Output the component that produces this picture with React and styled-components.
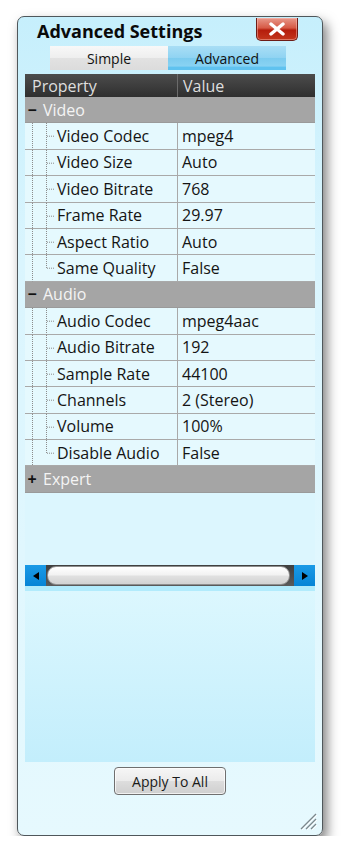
import React from 'react';
import styled, { createGlobalStyle } from 'styled-components';

const GlobalStyle = createGlobalStyle`
  html, body {
    margin: 0;
    padding: 0;
    background: #ffffff;
  }
  body {
    font-family: "Open Sans", "Noto Sans", sans-serif;
    color: #141414;
  }
`;

const groups = [
  {
    name: 'Video',
    open: true,
    rows: [
      ['Video Codec', 'mpeg4'],
      ['Video Size', 'Auto'],
      ['Video Bitrate', '768'],
      ['Frame Rate', '29.97'],
      ['Aspect Ratio', 'Auto'],
      ['Same Quality', 'False'],
    ],
  },
  {
    name: 'Audio',
    open: true,
    rows: [
      ['Audio Codec', 'mpeg4aac'],
      ['Audio Bitrate', '192'],
      ['Sample Rate', '44100'],
      ['Channels', '2 (Stereo)'],
      ['Volume', '100%'],
      ['Disable Audio', 'False'],
    ],
  },
  { name: 'Expert', open: false, rows: [] },
];

const App = () => {
  return (
    <>
      <GlobalStyle />
      <Window>
        <TitleBar>
          <Title>Advanced Settings</Title>
          <CloseButton aria-label="close">
            <svg width="18" height="14" viewBox="0 0 18 14">
              <path
                d="M3 2 L15 12 M15 2 L3 12"
                stroke="#ffffff"
                strokeWidth="3.4"
                strokeLinecap="round"
              />
            </svg>
          </CloseButton>
        </TitleBar>

        <Tabs>
          <Tab>Simple</Tab>
          <Tab active>Advanced</Tab>
        </Tabs>

        <Panel>
          <HeaderRow>
            <HeaderCell>Property</HeaderCell>
            <HeaderCell divider>Value</HeaderCell>
          </HeaderRow>

          {groups.map((g) => (
            <React.Fragment key={g.name}>
              <CategoryRow>
                <Toggle>{g.open ? '−' : '+'}</Toggle>
                <CategoryName>{g.name}</CategoryName>
              </CategoryRow>
              {g.rows.map(([label, value], i) => (
                <PropRow key={label}>
                  <NameCell>
                    <Guides width="32" height="100%">
                      <line x1="7.5" y1="0" x2="7.5" y2="100%" />
                      <line
                        x1="21.5"
                        y1="0"
                        x2="21.5"
                        y2={i === g.rows.length - 1 ? '50%' : '100%'}
                      />
                      <line x1="22" y1="50%" x2="29" y2="50%" />
                    </Guides>
                    {label}
                  </NameCell>
                  <ValueCell>{value}</ValueCell>
                </PropRow>
              ))}
            </React.Fragment>
          ))}

          <EmptyArea />

          <ScrollBar>
            <ScrollArrow>
              <svg width="6" height="8" viewBox="0 0 6 8">
                <path d="M6 0 L0 4 L6 8 Z" fill="#000" />
              </svg>
            </ScrollArrow>
            <Track>
              <Thumb />
            </Track>
            <ScrollArrow>
              <svg width="6" height="8" viewBox="0 0 6 8">
                <path d="M0 0 L6 4 L0 8 Z" fill="#000" />
              </svg>
            </ScrollArrow>
          </ScrollBar>
          <ScrollShadow />
          <LowerPane />
        </Panel>

        <Footer>
          <Button>Apply To All</Button>
        </Footer>

        <Grip width="18" height="18" viewBox="0 0 18 18">
          <path d="M17 2 L2 17 M17 7 L7 17 M17 12 L12 17" stroke="#7d878c" strokeWidth="1.3" />
          <path d="M18 3 L3 18 M18 8 L8 18 M18 13 L13 18" stroke="#ffffff" strokeWidth="1" />
        </Grip>
      </Window>
    </>
  );
};

const Window = styled.div`
  position: relative;
  box-sizing: border-box;
  margin: 16px 0 0 17px;
  width: 306px;
  height: 820px;
  border: 1px solid #4f575b;
  border-radius: 7px;
  background: linear-gradient(#c6effc 0%, #daf5fe 30%, #e6f9fe 100%);
  box-shadow: 4px 6px 12px rgba(0, 0, 0, 0.5);
  display: flex;
  flex-direction: column;
`;

const TitleBar = styled.div`
  display: flex;
  align-items: flex-start;
  height: 29px;
  flex: none;
`;

const Title = styled.div`
  margin: 2px 0 0 19px;
  font-size: 18px;
  font-weight: 700;
  line-height: 24px;
  color: #0a0a0a;
`;

const CloseButton = styled.div`
  margin: 1px 24px 0 auto;
  width: 42px;
  height: 23px;
  box-sizing: border-box;
  border: 1px solid #6d1d17;
  border-top: none;
  border-radius: 0 0 5px 5px;
  background: linear-gradient(#e8988a 0%, #d65a46 45%, #b51d0c 55%, #c4361c 100%);
  box-shadow: inset 0 0 0 1px rgba(255, 200, 190, 0.45);
  display: flex;
  align-items: center;
  justify-content: center;
`;

const Tabs = styled.div`
  display: flex;
  margin-left: 32px;
  height: 24px;
  flex: none;
`;

const Tab = styled.div`
  width: 118px;
  display: flex;
  align-items: center;
  justify-content: center;
  font-size: 14px;
  color: #111;
  background: ${(p) =>
    p.active
      ? 'linear-gradient(#a9def5 0%, #8fd3f2 50%, #7ccbee 51%, #8ad3f3 85%, #5fc2ef 86%, #5fc2ef 100%)'
      : 'linear-gradient(#f8f8f8 0%, #eeeeee 50%, #e2e2e2 51%, #dcdcdc 100%)'};
`;

const Panel = styled.div`
  margin: 4px 7px 0;
  height: 688px;
  flex: none;
  display: flex;
  flex-direction: column;
  background: #dcf6fe;
`;

const HeaderRow = styled.div`
  display: flex;
  height: 23px;
  flex: none;
  background: linear-gradient(#4c4c4c, #2f2f2f);
`;

const HeaderCell = styled.div`
  display: flex;
  align-items: center;
  font-size: 16px;
  color: #dedede;
  box-sizing: border-box;
  ${(p) =>
    p.divider
      ? 'flex: 1; padding-left: 5px; border-left: 1px solid #6b6b6b;'
      : 'width: 152px; padding-left: 7px;'}
`;

const CategoryRow = styled.div`
  display: flex;
  align-items: center;
  height: 26.4px;
  flex: none;
  box-sizing: border-box;
  background: #a5a5a5;
  border-bottom: 1px solid #9a9a9a;
`;

const Toggle = styled.span`
  width: 14px;
  text-align: center;
  font-size: 16px;
  font-weight: 700;
  color: #111;
`;

const CategoryName = styled.span`
  margin-left: 4px;
  font-size: 16px;
  color: #f4f4f4;
`;

const PropRow = styled.div`
  display: flex;
  height: 26.4px;
  flex: none;
  box-sizing: border-box;
  background: #e5f9fe;
  border-bottom: 1px solid #a9a9a9;
`;

const NameCell = styled.div`
  width: 152px;
  display: flex;
  align-items: center;
  font-size: 16px;
  white-space: nowrap;
`;

const Guides = styled.svg`
  flex: none;
  align-self: stretch;
  height: calc(100% + 1px);
  line {
    stroke: #8c8c8c;
    stroke-width: 1;
    stroke-dasharray: 1 1;
  }
`;

const ValueCell = styled.div`
  flex: 1;
  display: flex;
  align-items: center;
  padding-left: 4px;
  font-size: 16px;
  border-left: 1px solid #a9a9a9;
  white-space: nowrap;
`;

const EmptyArea = styled.div`
  flex: 1;
  background: #dcf6fe;
`;

const ScrollBar = styled.div`
  display: flex;
  height: 21px;
  flex: none;
`;

const ScrollArrow = styled.div`
  width: 21px;
  display: flex;
  align-items: center;
  justify-content: center;
  background: linear-gradient(#1b9ae6, #0684d6);
`;

const Track = styled.div`
  flex: 1;
  display: flex;
  align-items: center;
  padding: 0 2px 0 1px;
  background: linear-gradient(#3f3f3f, #5a5a5a);
`;

const Thumb = styled.div`
  width: 243px;
  height: 19px;
  box-sizing: border-box;
  border-radius: 9px;
  border: 1px solid #8e8e8e;
  background: linear-gradient(#ffffff 0%, #f2f2f2 45%, #e0e0e0 55%, #d2d2d2 100%);
`;

const ScrollShadow = styled.div`
  height: 5px;
  flex: none;
  background: #b2ebfc;
`;

const LowerPane = styled.div`
  height: 171px;
  flex: none;
  background: linear-gradient(#dcf7fe, #c3eefc);
`;

const Footer = styled.div`
  flex: 1;
  display: flex;
  justify-content: center;
  align-items: flex-start;
  padding-top: 5px;
`;

const Button = styled.div`
  width: 112px;
  height: 28px;
  box-sizing: border-box;
  border: 1px solid #6f6f6f;
  border-radius: 4px;
  background: linear-gradient(#f6f6f6 0%, #ebebeb 50%, #dddddd 51%, #cfcfcf 100%);
  box-shadow: inset 0 0 0 1px rgba(255, 255, 255, 0.7);
  display: flex;
  align-items: center;
  justify-content: center;
  font-size: 14px;
  color: #1a1a1a;
`;

const Grip = styled.svg`
  position: absolute;
  right: 5px;
  bottom: 5px;
`;

export default App;
